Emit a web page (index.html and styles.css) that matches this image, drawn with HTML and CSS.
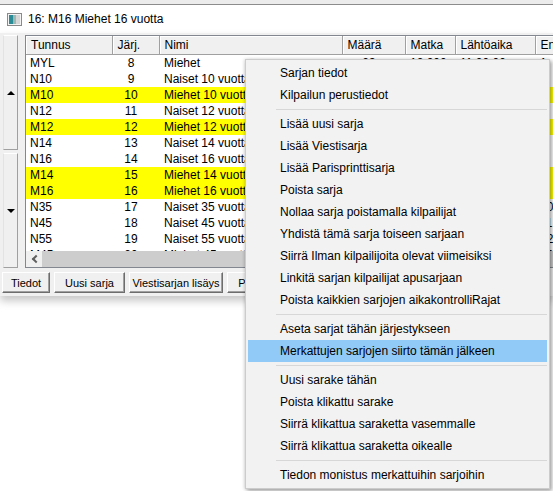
FILE: index.html
```html
<!DOCTYPE html>
<html lang="fi">
<head>
    <meta charset="UTF-8">
    <meta name="viewport" content="width=device-width, initial-scale=1.0">
    <title>Sarjat</title>
    <link rel="stylesheet" href="styles.css">
</head>
<body>

    <div class="topstrip"></div>
    <div class="titlebar">
        <svg class="app-icon" width="15" height="13" viewBox="0 0 15 13">
            <rect x="0.5" y="0.5" width="14" height="12" fill="#f4f4f4" stroke="#8a8a8a"/>
            <rect x="2" y="2" width="4" height="9" fill="#2a8c96"/>
            <rect x="6" y="2" width="3" height="9" fill="#9fb7b3"/>
            <rect x="9" y="2" width="4" height="9" fill="#d6d6d6"/>
        </svg>
        <span>16: M16 Miehet 16 vuotta</span>
    </div>

    <div class="window">
        <div class="main">
            <div class="scroll-btns">
                <div class="sbtn"><span class="tri-up"></span></div>
                <div class="sbtn"><span class="tri-down"></span></div>
            </div>
            <div class="grid">
                <div class="grid-body">
                    <table>
                        <colgroup>
                            <col style="width: 86px">
                            <col style="width: 47px">
                            <col style="width: 183px">
                            <col style="width: 63px">
                            <col style="width: 50px">
                            <col style="width: 80px">
                            <col style="width: 80px">
                        </colgroup>
                        <thead>
                            <tr>
                                <th>Tunnus</th>
                                <th>Järj.</th>
                                <th>Nimi</th>
                                <th>Määrä</th>
                                <th>Matka</th>
                                <th>Lähtöaika</th>
                                <th>Ensimmäinen</th>
                            </tr>
                        </thead>
                        <tbody>
                            <tr><td>MYL</td><td class="num">8</td><td>Miehet</td><td class="num">23</td><td class="num">12.000</td><td>11:00:00</td><td>1</td></tr>
                            <tr><td>N10</td><td class="num">9</td><td>Naiset 10 vuotta</td><td class="num">14</td><td class="num">2.000</td><td>11:00:00</td><td>2</td></tr>
                            <tr class="marked"><td>M10</td><td class="num">10</td><td>Miehet 10 vuotta</td><td class="num">12</td><td class="num">2.000</td><td>11:00:00</td><td>3</td></tr>
                            <tr><td>N12</td><td class="num">11</td><td>Naiset 12 vuotta</td><td class="num">18</td><td class="num">3.000</td><td>11:00:00</td><td>4</td></tr>
                            <tr class="marked"><td>M12</td><td class="num">12</td><td>Miehet 12 vuotta</td><td class="num">16</td><td class="num">3.000</td><td>11:00:00</td><td>5</td></tr>
                            <tr><td>N14</td><td class="num">13</td><td>Naiset 14 vuotta</td><td class="num">15</td><td class="num">4.000</td><td>11:00:00</td><td>6</td></tr>
                            <tr><td>N16</td><td class="num">14</td><td>Naiset 16 vuotta</td><td class="num">11</td><td class="num">5.000</td><td>11:00:00</td><td>7</td></tr>
                            <tr class="marked"><td>M14</td><td class="num">15</td><td>Miehet 14 vuotta</td><td class="num">17</td><td class="num">4.000</td><td>11:00:00</td><td>8</td></tr>
                            <tr class="marked"><td>M16</td><td class="num">16</td><td>Miehet 16 vuotta</td><td class="num">13</td><td class="num">6.000</td><td>11:00:00</td><td>9</td></tr>
                            <tr><td>N35</td><td class="num">17</td><td>Naiset 35 vuotta</td><td class="num">10</td><td class="num">6.000</td><td>11:00:00</td><td>10</td></tr>
                            <tr><td>N45</td><td class="num">18</td><td>Naiset 45 vuotta</td><td class="num">9</td><td class="num">5.000</td><td>11:00:00</td><td>11</td></tr>
                            <tr><td>N55</td><td class="num">19</td><td>Naiset 55 vuotta</td><td class="num">8</td><td class="num">4.000</td><td>11:00:00</td><td>12</td></tr>
                            <tr><td>M45</td><td class="num">20</td><td>Miehet 45 vuotta</td><td class="num">12</td><td class="num">8.000</td><td>11:00:00</td><td>13</td></tr>
                        </tbody>
                    </table>
                </div>
                <div class="hscroll">
                    <div class="hs-arrow"><span class="chev-left"></span></div>
                    <div class="hs-thumb"></div>
                </div>
            </div>
        </div>
        <div class="buttons">
            <button class="b-tiedot">Tiedot</button>
            <button class="b-uusi">Uusi sarja</button>
            <button class="b-viesti">Viestisarjan lisäys</button>
            <button class="b-poista">Poista sarja</button>
        </div>
    </div>

    <!-- context menu over the grid -->
    <div class="menu">
        <div class="item">Sarjan tiedot</div>
        <div class="item">Kilpailun perustiedot</div>
        <div class="sep"></div>
        <div class="item">Lisää uusi sarja</div>
        <div class="item">Lisää Viestisarja</div>
        <div class="item">Lisää Parisprinttisarja</div>
        <div class="item">Poista sarja</div>
        <div class="item">Nollaa sarja poistamalla kilpailijat</div>
        <div class="item">Yhdistä tämä sarja toiseen sarjaan</div>
        <div class="item">Siirrä Ilman kilpailijoita olevat viimeisiksi</div>
        <div class="item">Linkitä sarjan kilpailijat apusarjaan</div>
        <div class="item">Poista kaikkien sarjojen aikakontrolliRajat</div>
        <div class="sep"></div>
        <div class="item">Aseta sarjat tähän järjestykseen</div>
        <div class="item active">Merkattujen sarjojen siirto tämän jälkeen</div>
        <div class="sep"></div>
        <div class="item">Uusi sarake tähän</div>
        <div class="item">Poista klikattu sarake</div>
        <div class="item">Siirrä klikattua saraketta vasemmalle</div>
        <div class="item">Siirrä klikattua saraketta oikealle</div>
        <div class="sep"></div>
        <div class="item">Tiedon monistus merkattuihin sarjoihin</div>
    </div>

</body>
</html>
```

FILE: styles.css
```css
body {
    margin: 0;
    width: 553px;
    height: 491px;
    overflow: hidden;
    position: relative;
    background-color: #ffffff;
    font-family: "Liberation Sans", Arial, sans-serif;
    font-size: 12px;
    color: #000;
}
.topstrip {
    height: 4px;
    background-color: #ececec;
    border-bottom: 1px solid #8c8c8c;
}
.titlebar {
    height: 28px;
    display: flex;
    align-items: center;
    gap: 6px;
    padding-left: 7px;
    background-color: #fff;
}
.app-icon {
    display: block;
}
.window {
    height: 263px;
    box-sizing: border-box;
    padding-top: 2px;
    background-color: #f0f0f0;
    box-shadow: 0 5px 8px rgba(0, 0, 0, 0.22);
}
.main {
    display: flex;
    height: 233px;
}
.scroll-btns {
    width: 15px;
    margin-left: 3px;
    margin-right: 7px;
    display: flex;
    flex-direction: column;
    gap: 3px;
}
.sbtn {
    flex: 1;
    display: flex;
    align-items: center;
    justify-content: center;
    background-color: #f0f0f0;
    border: 1px solid;
    border-color: #ffffff #a0a0a0 #a0a0a0 #e3e3e3;
}
.tri-up, .tri-down {
    width: 0;
    height: 0;
    border-left: 4px solid transparent;
    border-right: 4px solid transparent;
}
.tri-up {
    border-bottom: 4px solid #000;
}
.tri-down {
    border-top: 4px solid #000;
}
.grid {
    flex: 1;
    min-width: 0;
    display: flex;
    flex-direction: column;
    border: 1px solid #828790;
    border-right: none;
    background-color: #fff;
    overflow: hidden;
}
.grid-body {
    flex: 1;
    overflow: hidden;
}
table {
    border-collapse: collapse;
    table-layout: fixed;
    width: 589px;
}
th {
    height: 18px;
    box-sizing: border-box;
    padding: 0 5px;
    text-align: left;
    font-weight: normal;
    white-space: nowrap;
    overflow: hidden;
    background-color: #f0f0f0;
    border-right: 1px solid #a0a0a0;
    border-bottom: 1px solid #a0a0a0;
    box-shadow: inset 1px 1px 0 #ffffff;
}
td {
    height: 16px;
    padding: 0 5px;
    white-space: nowrap;
    overflow: hidden;
}
td:first-child {
    padding-left: 4px;
}
td.num {
    text-align: center;
    padding-right: 14px;
}
tr.marked td {
    background-color: #ffff00;
}
.hscroll {
    height: 16px;
    display: flex;
    flex-shrink: 0;
    background-color: #cdcdcd;
}
.hs-arrow {
    width: 16px;
    display: flex;
    align-items: center;
    justify-content: center;
    background-color: #f0f0f0;
}
.chev-left {
    width: 4px;
    height: 4px;
    border-left: 2px solid #606060;
    border-bottom: 2px solid #606060;
    transform: rotate(45deg);
    margin-left: 3px;
}
.hs-thumb {
    flex: 1;
    background-color: #cdcdcd;
}
.buttons {
    display: flex;
    gap: 4px;
    padding: 4px 0 0 2px;
}
button {
    height: 21px;
    padding: 0;
    font-family: inherit;
    font-size: 11px;
    color: #000;
    background-color: #f0f0f0;
    border: 1px solid;
    border-color: #ffffff #6d6d6d #6d6d6d #ffffff;
    box-shadow: inset -1px -1px 0 #a0a0a0;
    flex-shrink: 0;
}
.b-tiedot {
    width: 48px;
}
.b-uusi {
    width: 71px;
}
.b-viesti {
    width: 94px;
}
.b-poista {
    width: 80px;
}
.menu {
    position: absolute;
    left: 245px;
    top: 59px;
    width: 305px;
    box-sizing: border-box;
    padding: 2px;
    background-color: #f2f2f2;
    border: 1px solid #cccccc;
    box-shadow: 2px 2px 4px rgba(0, 0, 0, 0.35), -1px 0 3px rgba(0, 0, 0, 0.12);
}
.item {
    height: 22px;
    line-height: 22px;
    padding-left: 32px;
    white-space: nowrap;
}
.item.active {
    background-color: #91c9f7;
}
.sep {
    height: 1px;
    margin: 3px 0 3px 28px;
    background-color: #d7d7d7;
}
```
